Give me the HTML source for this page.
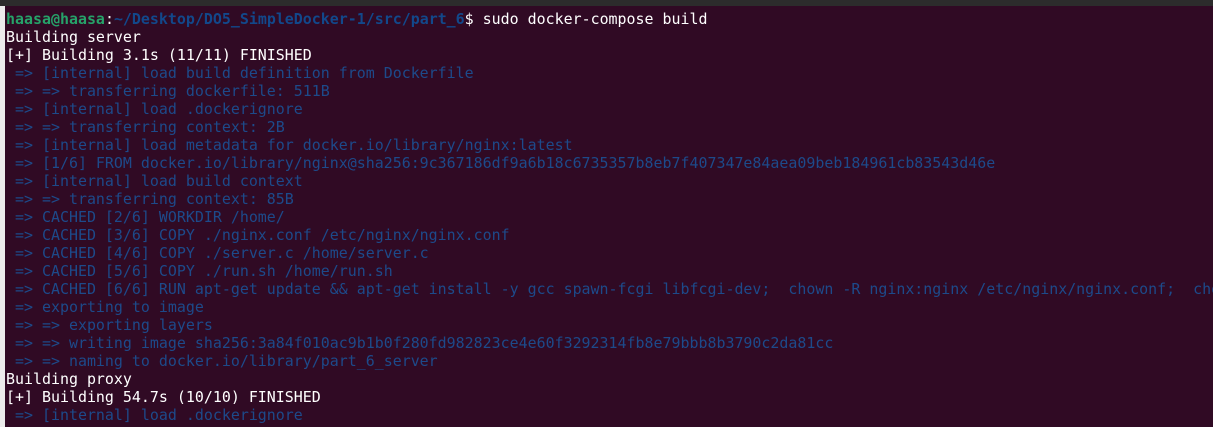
<!DOCTYPE html>
<html><head><style>
html,body{margin:0;padding:0;width:1213px;height:427px;overflow:hidden;background:#300a24;}
.top{position:absolute;left:0;top:0;width:1213px;height:6px;background:#2c2c2c;}
.left{position:absolute;left:0;top:6px;width:5px;height:421px;background:#ececec;}
pre{position:absolute;left:6px;top:10px;margin:0;font-family:"DejaVu Sans Mono","Liberation Mono",monospace;font-size:14.94px;line-height:18px;color:#ffffff;white-space:pre;}
.g{color:#26a269;font-weight:bold}.b{color:#12488b;font-weight:bold}
.d{color:#1d4a8a}
</style></head><body>
<div class="top"></div><div class="left"></div>
<pre><span class="g">haasa@haasa</span>:<span class="b">~/Desktop/DO5_SimpleDocker-1/src/part_6</span>$ sudo docker-compose build
Building server
[+] Building 3.1s (11/11) FINISHED
<span class="d"> => [internal] load build definition from Dockerfile
 => => transferring dockerfile: 511B
 => [internal] load .dockerignore
 => => transferring context: 2B
 => [internal] load metadata for docker.io/library/nginx:latest
 => [1/6] FROM docker.io/library/nginx@sha256:9c367186df9a6b18c6735357b8eb7f407347e84aea09beb184961cb83543d46e
 => [internal] load build context
 => => transferring context: 85B
 => CACHED [2/6] WORKDIR /home/
 => CACHED [3/6] COPY ./nginx.conf /etc/nginx/nginx.conf
 => CACHED [4/6] COPY ./server.c /home/server.c
 => CACHED [5/6] COPY ./run.sh /home/run.sh
 => CACHED [6/6] RUN apt-get update &amp;&amp; apt-get install -y gcc spawn-fcgi libfcgi-dev;  chown -R nginx:nginx /etc/nginx/nginx.conf;  chown
 => exporting to image
 => => exporting layers
 => => writing image sha256:3a84f010ac9b1b0f280fd982823ce4e60f3292314fb8e79bbb8b3790c2da81cc
 => => naming to docker.io/library/part_6_server</span>
Building proxy
[+] Building 54.7s (10/10) FINISHED
<span class="d"> => [internal] load .dockerignore</span></pre>
</body></html>
